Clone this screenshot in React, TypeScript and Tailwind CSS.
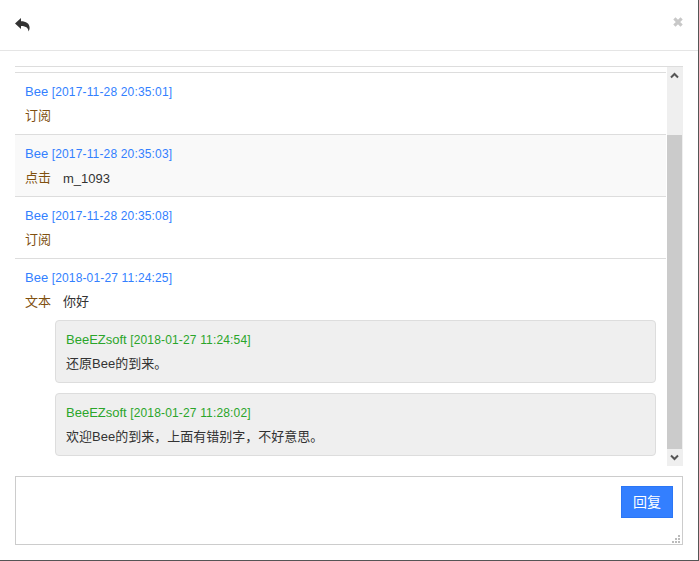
const sans = "font-['Liberation_Sans','Noto_Sans_CJK_SC',sans-serif]";

type Entry = {
  time: string;
  label: string;
  text?: string;
  striped?: boolean;
};

const entries: Entry[] = [
  { time: "2017-11-28 20:35:01", label: "订阅" },
  { time: "2017-11-28 20:35:03", label: "点击", text: "m_1093", striped: true },
  { time: "2017-11-28 20:35:08", label: "订阅" },
];

function Row({ time, label, text, striped }: Entry) {
  return (
    <div className={`h-[62px] border-t border-[#ddd] pl-[10px] pt-[10px] ${striped ? "bg-[#f9f9f9]" : ""}`}>
      <div className="h-[17px] text-[12px] leading-[17px] tracking-[0.16px] text-[#337fff]">
        <span className="text-[13px] tracking-normal">Bee</span> [{time}]
      </div>
      <div className="mt-[8px] flex h-[17px] text-[13px] leading-[17px]">
        <span className="-mt-px w-[38px] text-[#80500f]">{label}</span>
        {text && <span className="text-[#333]">{text}</span>}
      </div>
    </div>
  );
}

function Reply({ time, text }: { time: string; text: string }) {
  return (
    <div className="h-[63px] rounded-[4px] border border-[#ddd] bg-[#efefef] pl-[10px] pt-[10px]">
      <div className="h-[17px] text-[12px] leading-[17px] tracking-[0.16px] text-[#2aa52a]">
        <span className="text-[13px] tracking-normal">BeeEZsoft</span> [{time}]
      </div>
      <div className="mt-[7px] h-[17px] text-[13px] leading-[17px] text-[#333]">{text}</div>
    </div>
  );
}

function ScrollBar() {
  return (
    <div className="flex w-[16px] flex-col bg-[#efefef]">
      <div className="flex h-[17px] items-center justify-center pr-px">
        <svg width="9" height="7" viewBox="0 0 9 7">
          <path d="M1 5.5 4.5 2 8 5.5" fill="none" stroke="#555" strokeWidth="2" />
        </svg>
      </div>
      <div className="h-[51px]" />
      <div className="h-[314px] w-[15px] bg-[#cbcbcb]" />
      <div className="flex h-[17px] items-center justify-center pr-px">
        <svg width="9" height="7" viewBox="0 0 9 7">
          <path d="M1 1.5 4.5 5 8 1.5" fill="none" stroke="#555" strokeWidth="2" />
        </svg>
      </div>
    </div>
  );
}

export default function App() {
  return (
    <div className={`${sans} h-[561px] w-[699px] bg-white`}>
      <div className="h-[561px] w-[699px] border-b border-r border-[#555]">
        <div className="flex h-[51px] items-start justify-between border-b border-[#e5e5e5] pl-[15px] pr-[15px]">
          <svg className="mt-[18px]" width="15" height="14" viewBox="0 0 15 14">
            <path
              d="M0 5.5 6 0V3.2C11 3.2 14.6 5.4 14.6 9.8 14.6 11.4 14 12.6 13.4 13.6 13.6 10.4 11.4 8 6 8V11Z"
              fill="#333"
            />
          </svg>
          <svg className="mt-[17px]" width="10" height="10" viewBox="0 0 10 10">
            <path d="M1.4 1.4 8.6 8.6M8.6 1.4 1.4 8.6" stroke="#c8c8c8" strokeWidth="3.2" />
          </svg>
        </div>

        <div className="mx-[15px] mt-[15px] flex h-[400px] border-t border-[#ddd]">
          <div className="mr-px w-[651px] overflow-hidden pt-[5px]">
            {entries.map((entry) => (
              <Row key={entry.time} {...entry} />
            ))}
            <div className="border-t border-[#ddd] pl-[10px] pt-[10px]">
              <div className="h-[17px] text-[12px] leading-[17px] tracking-[0.16px] text-[#337fff]">
                <span className="text-[13px] tracking-normal">Bee</span> [2018-01-27 11:24:25]
              </div>
              <div className="mt-[8px] flex h-[17px] text-[13px] leading-[17px]">
                <span className="-mt-px w-[38px] text-[#80500f]">文本</span>
                <span className="-mt-px text-[#333]">你好</span>
              </div>
              <div className="ml-[30px] mr-[10px] mt-[9px] flex flex-col gap-[10px]">
                <Reply time="2018-01-27 11:24:54" text="还原Bee的到来。" />
                <Reply time="2018-01-27 11:28:02" text="欢迎Bee的到来，上面有错别字，不好意思。" />
              </div>
            </div>
          </div>
          <ScrollBar />
        </div>

        <div className="relative mx-[15px] mt-[10px] flex h-[69px] justify-end border border-[#ccc] pr-[9px] pt-[9px]">
          <button className="h-[32px] w-[52px] border border-[#2b76f5] bg-[#337fff] text-[14px] text-white">
            回复
          </button>
          <svg className="absolute bottom-[1px] right-[1px]" width="9" height="9" viewBox="0 0 9 9">
            <path d="M6 1h2v2H6zM3 4h2v2H3zM6 4h2v2H6zM0 7h2v2H0zM3 7h2v2H3zM6 7h2v2H6z" fill="#bbb" />
          </svg>
        </div>
      </div>
    </div>
  );
}
